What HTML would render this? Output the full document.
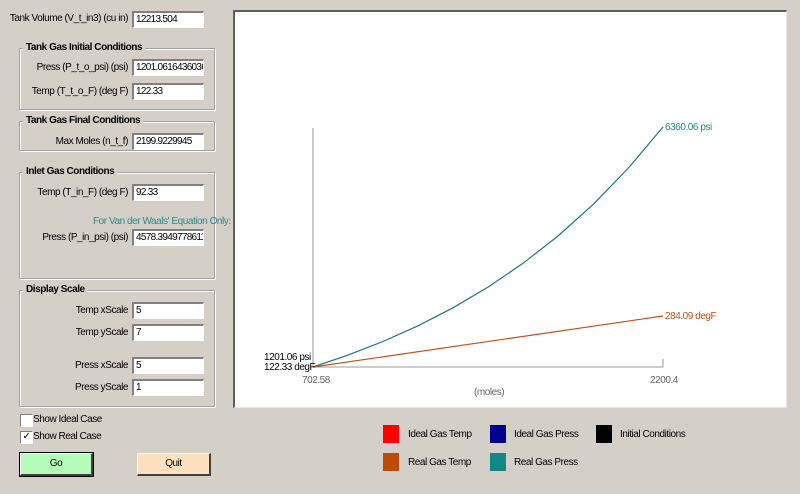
<!DOCTYPE html>
<html><head><style>
body{margin:0;width:800px;height:494px;background:#d4d0c8;font-family:"Liberation Sans",sans-serif;font-size:10px;color:#000;position:relative;overflow:hidden;letter-spacing:-0.45px}
.a{position:absolute;white-space:nowrap}
.in{position:absolute;background:#fff;border-top:2px solid #808080;border-left:2px solid #808080;border-right:1px solid #fff;border-bottom:1px solid #fff;box-sizing:border-box;width:72px;height:17px;padding-left:2px;line-height:14px;overflow:hidden;white-space:nowrap;letter-spacing:-0.7px}
.g{position:absolute;border:1px solid #a0a0a0;box-shadow:1px 1px 0 #fff inset,1px 1px 0 #fff;box-sizing:border-box;left:19px;width:196px}
.gt{position:absolute;background:#d4d0c8;font-weight:bold;padding:0 3px;left:23px}
.lb{position:absolute;text-align:right;width:120px;left:8px;white-space:nowrap}
.sw{position:absolute;width:16px;height:18px}
.btn{position:absolute;box-sizing:border-box;border:1px solid #fff;border-right:2px solid #404040;border-bottom:2px solid #404040;text-align:center;line-height:20px}
.cb{position:absolute;width:11px;height:11px;background:#fff;border-top:1px solid #808080;border-left:1px solid #808080;border-right:1px solid #fff;border-bottom:1px solid #fff;left:20px;font-size:10px;line-height:10px;text-align:center}
</style></head><body>
<div class="lb" style="top:13px">Tank Volume (V_t_in3) (cu in)</div><div class="in" style="left:132px;top:11px">12213.504</div>

<div class="g" style="top:48px;height:62px"></div><div class="gt" style="top:42px">Tank Gas Initial Conditions</div>
<div class="lb" style="top:62px">Press (P_t_o_psi) (psi)</div><div class="in" style="left:132px;top:59px">1201.06164360361</div>
<div class="lb" style="top:86px">Temp (T_t_o_F) (deg F)</div><div class="in" style="left:132px;top:83px">122.33</div>

<div class="g" style="top:121px;height:30px"></div><div class="gt" style="top:115px">Tank Gas Final Conditions</div>
<div class="lb" style="top:136px">Max Moles (n_t_f)</div><div class="in" style="left:132px;top:133px">2199.9229945</div>

<div class="g" style="top:172px;height:107px"></div><div class="gt" style="top:166px">Inlet Gas Conditions</div>
<div class="lb" style="top:187px">Temp (T_in_F) (deg F)</div><div class="in" style="left:132px;top:184px">92.33</div>
<div class="a" style="left:93px;top:216px;color:#2a8a8a">For Van der Waals' Equation Only:</div>
<div class="lb" style="top:232px">Press (P_in_psi) (psi)</div><div class="in" style="left:132px;top:229px">4578.39497786116</div>

<div class="g" style="top:290px;height:117px"></div><div class="gt" style="top:284px">Display Scale</div>
<div class="lb" style="top:305px">Temp xScale</div><div class="in" style="left:132px;top:302px">5</div>
<div class="lb" style="top:327px">Temp yScale</div><div class="in" style="left:132px;top:324px">7</div>
<div class="lb" style="top:360px">Press xScale</div><div class="in" style="left:132px;top:357px">5</div>
<div class="lb" style="top:382px">Press yScale</div><div class="in" style="left:132px;top:379px">1</div>

<div class="cb" style="top:414px"></div><div class="a" style="left:33px;top:414px">Show Ideal Case</div>
<div class="cb" style="top:431px">✓</div><div class="a" style="left:33px;top:431px">Show Real Case</div>

<div class="btn" style="left:20px;top:453px;width:73px;height:23px;background:#b6fcb9;outline:1px solid #000">Go</div>
<div class="btn" style="left:137px;top:453px;width:74px;height:23px;background:#fde0c0">Quit</div>

<div style="position:absolute;left:233px;top:10px;width:554px;height:398px;background:#fff;border-top:2px solid #606060;border-left:2px solid #606060;border-right:1px solid #e8e8e8;border-bottom:1px solid #e8e8e8;box-sizing:border-box"></div>
<svg class="a" style="left:0;top:0" width="800" height="494">
<polyline points="313,128 313,367 663,367 663,359" fill="none" stroke="#999" stroke-width="1"/>
<polyline points="313,367 348,355.1 383,341.5 418,325.8 453,307.8 488,287.1 523,263.3 558,236 593,204.6 628,168.5 663,127" fill="none" stroke="#1a7a72" stroke-width="1.2"/>
<line x1="313" y1="367" x2="663" y2="316" stroke="#c0501c" stroke-width="1.2"/>
</svg>
<div class="a" style="left:665px;top:122px;color:#1a8a8a">6360.06 psi</div>
<div class="a" style="left:665px;top:311px;color:#c0501c">284.09 degF</div>
<div class="a" style="left:264px;top:352px">1201.06 psi</div>
<div class="a" style="left:264px;top:362px">122.33 degF</div>
<div class="a" style="left:302px;top:375px;color:#666">702.58</div>
<div class="a" style="left:650px;top:375px;color:#666">2200.4</div>
<div class="a" style="left:474px;top:387px;color:#666">(moles)</div>

<div class="sw" style="left:383px;top:425px;background:#f00"></div><div class="a" style="left:408px;top:429px">Ideal Gas Temp</div>
<div class="sw" style="left:490px;top:425px;background:#00008a"></div><div class="a" style="left:514px;top:429px">Ideal Gas Press</div>
<div class="sw" style="left:596px;top:425px;background:#000"></div><div class="a" style="left:620px;top:429px">Initial Conditions</div>
<div class="sw" style="left:383px;top:453px;background:#c04808"></div><div class="a" style="left:408px;top:457px">Real Gas Temp</div>
<div class="sw" style="left:490px;top:453px;background:#108888"></div><div class="a" style="left:514px;top:457px">Real Gas Press</div>
</body></html>
